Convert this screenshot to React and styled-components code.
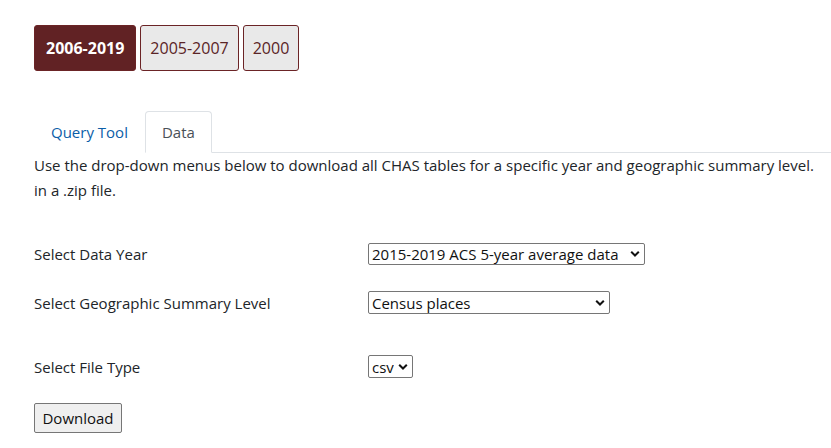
import styled, { createGlobalStyle } from "styled-components";

const GlobalStyle = createGlobalStyle`
  body {
    margin: 0;
    background: #fff;
    color: #212529;
    font-family: "Open Sans", "Noto Sans", sans-serif;
    font-size: 15px;
  }
`;

function Chevron() {
  return (
    <svg width="10" height="7" viewBox="0 0 10 7">
      <path d="M1.2 1.2 L5 5 L8.8 1.2" fill="none" stroke="#111" strokeWidth="2" />
    </svg>
  );
}

function Select({ width, height, value }) {
  return (
    <SelectWrap>
      <StyledSelect $width={width} $height={height} defaultValue={value}>
        <option>{value}</option>
      </StyledSelect>
      <Arrow>
        <Chevron />
      </Arrow>
    </SelectWrap>
  );
}

function App() {
  return (
    <Page>
      <GlobalStyle />
      <YearGroup>
        <YearButton $active>2006-2019</YearButton>
        <YearButton>2005-2007</YearButton>
        <YearButton>2000</YearButton>
      </YearGroup>

      <Tabs>
        <Tab>Query Tool</Tab>
        <Tab $active>Data</Tab>
      </Tabs>

      <Intro>
        Use the drop-down menus below to download all CHAS tables for a
        specific year and geographic summary level.
        <br />
        in a .zip file.
      </Intro>

      <FormRow $gap={40}>
        <Label>Select Data Year</Label>
        <Select width={277} height={22} value="2015-2019 ACS 5-year average data" />
      </FormRow>
      <FormRow $gap={26}>
        <Label>Select Geographic Summary Level</Label>
        <Select width={242} height={23} value="Census places" />
      </FormRow>
      <FormRow $gap={41}>
        <Label>Select File Type</Label>
        <Select width={45} height={23} value="csv" />
      </FormRow>

      <DownloadButton>Download</DownloadButton>
    </Page>
  );
}

export default App;

const Page = styled.div`
  padding: 25px 0 0 34px;
`;

const YearGroup = styled.div`
  display: flex;
  gap: 4px;
`;

const YearButton = styled.button`
  height: 46px;
  padding: 0 ${(p) => (p.$active ? 11 : 9)}px;
  border: 1px solid #6b2426;
  border-radius: 3px;
  background: ${(p) => (p.$active ? "#612224" : "#e9e9e9")};
  color: ${(p) => (p.$active ? "#fff" : "#5a2426")};
  font-family: inherit;
  font-size: 16px;
  font-weight: ${(p) => (p.$active ? 700 : 400)};
`;

const Tabs = styled.div`
  display: flex;
  margin-top: 40px;
  border-bottom: 1px solid #dee2e6;
`;

const Tab = styled.div`
  padding: 8px 16px;
  line-height: 24px;
  margin-bottom: -1px;
  border: 1px solid ${(p) => (p.$active ? "#dee2e6" : "transparent")};
  border-bottom-color: ${(p) => (p.$active ? "#fff" : "transparent")};
  border-radius: 4px 4px 0 0;
  background: #fff;
  color: ${(p) => (p.$active ? "#495057" : "#0b5ea8")};
`;

const Intro = styled.p`
  margin: 0;
  line-height: 25px;
  white-space: nowrap;
`;

const FormRow = styled.div`
  display: flex;
  align-items: center;
  margin-top: ${(p) => p.$gap}px;
`;

const Label = styled.div`
  width: 334px;
`;

const SelectWrap = styled.div`
  position: relative;
  display: flex;
`;

const StyledSelect = styled.select`
  appearance: none;
  box-sizing: border-box;
  width: ${(p) => p.$width}px;
  height: ${(p) => p.$height}px;
  padding: 0 18px 0 3px;
  border: 1px solid #767676;
  border-radius: 2px;
  background: #fff;
  color: #111;
  font-family: inherit;
  font-size: 15px;
`;

const Arrow = styled.span`
  position: absolute;
  right: 5px;
  top: 50%;
  transform: translateY(-50%);
  display: flex;
  pointer-events: none;
`;

const DownloadButton = styled.button`
  display: block;
  margin-top: 25px;
  box-sizing: border-box;
  width: 88px;
  height: 30px;
  border: 1px solid #767676;
  border-radius: 2px;
  background: #efefef;
  color: #111;
  font-family: inherit;
  font-size: 15px;
`;
